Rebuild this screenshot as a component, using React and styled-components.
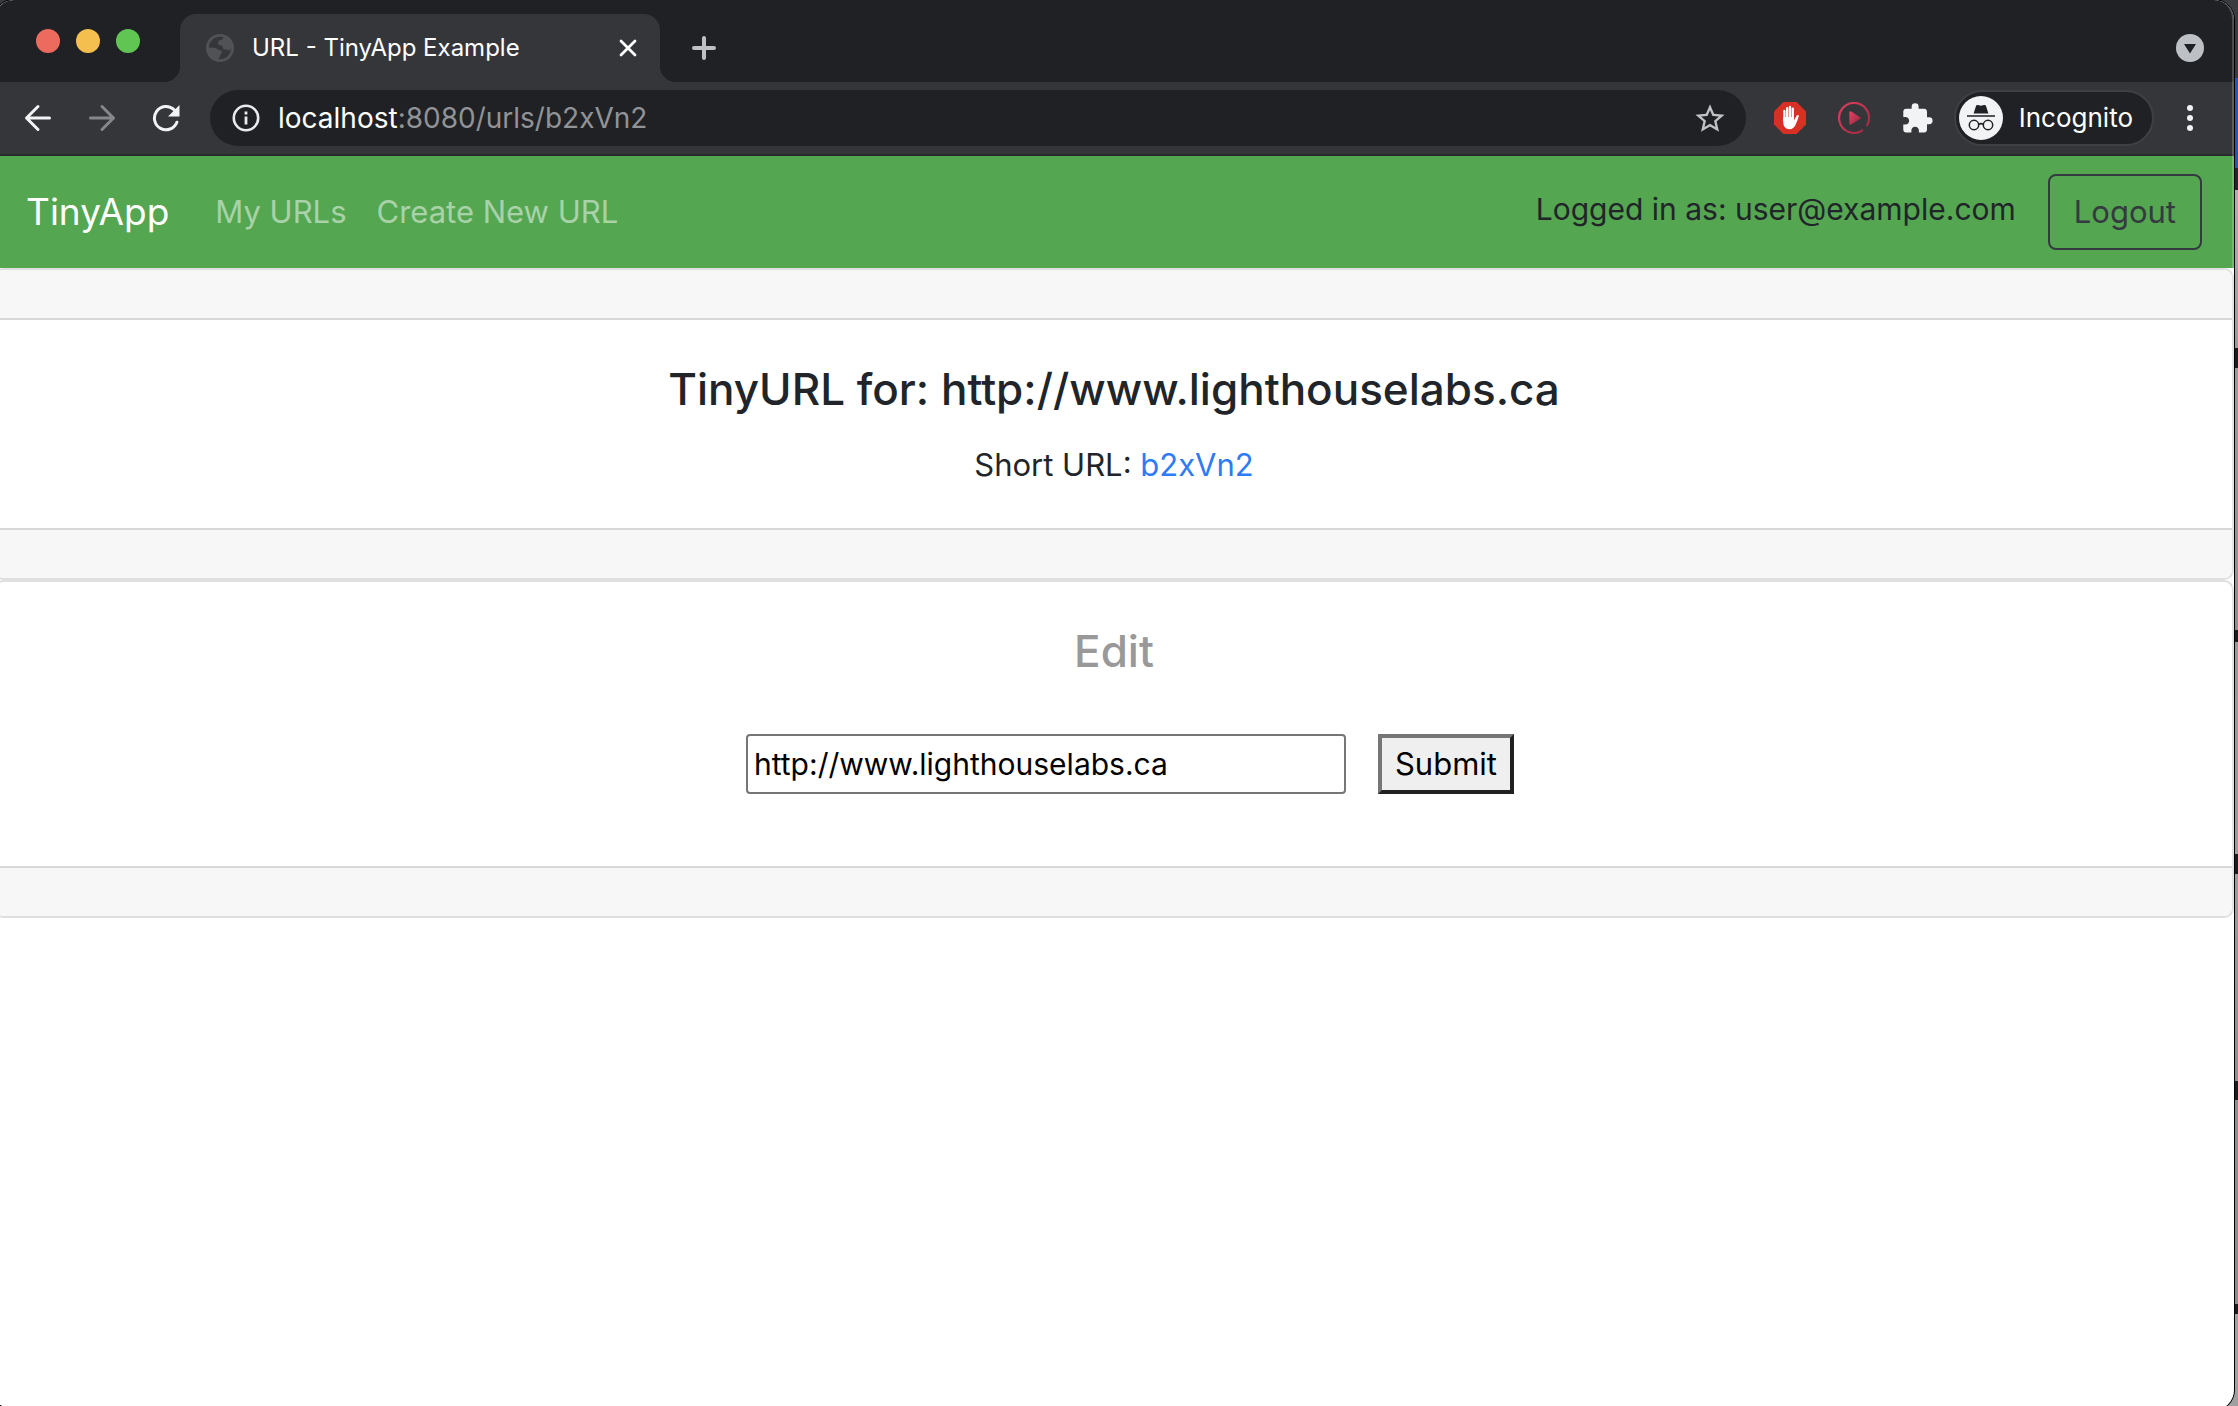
import React from "react";
import styled, { createGlobalStyle } from "styled-components";

const color = {
  frame: "#202124",
  toolbar: "#35363a",
  icon: "#f1f3f4",
  green: "#54a651",
  ink: "#212529",
  rule: "#dfdfdf",
  band: "#f7f7f7",
  link: "#2f7bf6",
};

const GlobalStyle = createGlobalStyle`
  *, *::before, *::after { box-sizing: border-box; }
  body {
    margin: 0;
    font-family: Inter, Roboto, "Liberation Sans", sans-serif;
    font-size: 31px;
    line-height: 46px;
    color: ${color.ink};
  }
  button, input { font: inherit; margin: 0; }
`;

/* ---------- desktop and window ---------- */

const Desktop = styled.div`
  height: 100vh;
  overflow: hidden;
  padding-right: 4px;
  background: linear-gradient(
    #3a3b3e 0 78px, #2458b8 78px 168px, #23272b 168px 190px,
    #b0b0b0 190px, #9c9c9c 348px, #1c1c1e 348px 368px, #9c9c9c 368px,
    #8f8f8f 630px, #1c1c1e 630px 642px, #9a9a9a 642px,
    #9c9c9c 854px, #1c1c1e 854px 874px, #9c9c9c 874px,
    #909090 1081px, #1c1c1e 1081px 1100px, #909090 1100px,
    #8c8c8c 1304px, #1c1c1e 1304px 1314px, #a0a0a0 1314px
  );
`;

const Window = styled.div`
  position: relative;
  display: flex;
  flex-direction: column;
  height: calc(100vh + 4px);
  margin-left: -6px;
  border-radius: 20px;
  overflow: hidden;
  background: #fff;
  box-shadow: 0 0 0 1px #000;

  &::after {
    content: "";
    position: absolute;
    inset: -1px 0 0;
    border: 2px solid rgba(255, 255, 255, 0.2);
    border-top-width: 1px;
    border-radius: 20px;
    pointer-events: none;
  }
`;

/* ---------- browser chrome ---------- */

const TabStrip = styled.div`
  display: flex;
  align-items: flex-end;
  height: 82px;
  padding: 0 12px 0 42px;
  background: ${color.frame};
`;

const Lights = styled.div`
  display: flex;
  align-items: center;
  align-self: stretch;
  gap: 16px;
  margin-right: 40px;
`;

const Light = styled.button`
  width: 24px;
  height: 24px;
  padding: 0;
  border: 0;
  border-radius: 50%;
  background: ${(p) => p.$tint};
`;

const Tab = styled.div`
  position: relative;
  display: flex;
  align-items: center;
  gap: 18px;
  width: 480px;
  height: 68px;
  padding: 0 20px 0 26px;
  border-radius: 16px 16px 0 0;
  background: ${color.toolbar};

  &::before,
  &::after {
    content: "";
    position: absolute;
    bottom: 0;
    width: 16px;
    height: 16px;
  }
  &::before {
    right: 100%;
    background: radial-gradient(circle at 0 0, transparent 16px, ${color.toolbar} 16px);
  }
  &::after {
    left: 100%;
    background: radial-gradient(circle at 100% 0, transparent 16px, ${color.toolbar} 16px);
  }
`;

const TabTitle = styled.span`
  flex: 1;
  font-size: 24px;
  line-height: 32px;
  white-space: nowrap;
  color: #fff;
`;

const IconButton = styled.button`
  display: flex;
  align-items: center;
  justify-content: center;
  flex: none;
  width: ${(p) => (p.$small ? "24px" : "64px")};
  height: ${(p) => (p.$small ? "24px" : "68px")};
  padding: 0;
  border: 0;
  background: none;
  color: ${(p) => p.$tint || color.icon};

  svg { display: block; }
`;

const NewTab = styled(IconButton)`
  margin: 0 auto 0 12px;
`;

const Toolbar = styled.div`
  display: flex;
  align-items: center;
  height: 74px;
  padding: 0 12px;
  border-bottom: 2px solid #28292c;
  background: ${color.toolbar};
`;

const Omnibox = styled.div`
  display: flex;
  align-items: center;
  flex: 1;
  gap: 18px;
  height: 56px;
  margin: 0 12px;
  padding: 0 20px 0 22px;
  border-radius: 28px;
  background: ${color.frame};

  svg { flex: none; }
`;

const Address = styled.div`
  flex: 1;
  font-size: 28px;
  line-height: 38px;
  white-space: nowrap;
  color: #919396;
`;

const Host = styled.span`
  color: #fff;
`;

const Profile = styled.button`
  display: flex;
  align-items: center;
  gap: 16px;
  height: 56px;
  margin: 0 4px;
  padding: 0 19px 0 3px;
  border: 2px solid #3f4043;
  border-radius: 28px;
  background: ${color.frame};
  font-size: 26px;
  line-height: 38px;
  color: #fff;
`;

/* ---------- page ---------- */

const Navbar = styled.nav`
  display: flex;
  align-items: center;
  padding: 18px 32px;
  background: ${color.green};
`;

const Brand = styled.a`
  margin-right: 46px;
  font-size: 37px;
  line-height: 56px;
  text-decoration: none;
  color: #fff;
`;

const NavLinks = styled.div`
  display: flex;
  flex: 1;
  gap: 30px;
`;

const NavLink = styled.a`
  text-decoration: none;
  color: rgba(255, 255, 255, 0.5);
`;

const Account = styled.form`
  display: flex;
  align-items: center;
  gap: 32px;
`;

const Status = styled.span`
  padding-bottom: 6px;
  font-size: 30px;
`;

const Logout = styled.button`
  height: 76px;
  padding: 0 24px;
  border: 2px solid #343a40;
  border-radius: 8px;
  background: transparent;
  color: #343a40;
`;

const Card = styled.section`
  border: 2px solid ${color.rule};
  border-radius: 10px;
  overflow: hidden;
  background: #fff;
  text-align: center;
`;

const Band = styled.div`
  height: 50px;
  background: ${color.band};
  border-top: ${(p) => (p.$footer ? "2px solid #d8d8d8" : "0")};
  border-bottom: ${(p) => (p.$footer ? "0" : "2px solid #d8d8d8")};
`;

const CardBody = styled.div`
  padding: 40px;
`;

const Title = styled.h2`
  margin: 0 0 24px;
  font-size: 44px;
  font-weight: 500;
  line-height: 58px;
  color: ${(p) => (p.$muted ? "#999" : "inherit")};
`;

const Text = styled.p`
  margin: 0;
`;

const ShortLink = styled.a`
  text-decoration: none;
  color: ${color.link};
`;

const EditForm = styled.form`
  display: flex;
  justify-content: center;
  padding: 30px 0 32px;
`;

const UrlInput = styled.input`
  width: 600px;
  height: 60px;
  margin: 0 32px;
  padding: 0 6px;
  border: 2px solid #767676;
  border-radius: 4px;
  background: #fff;
  font-size: 30px;
  color: #000;
`;

const Submit = styled.button`
  height: 60px;
  padding: 0 13px;
  border: 4px solid;
  border-color: #767676 #212121 #212121 #767676;
  background: #efefef;
  color: #000;
`;

/* ---------- icons ---------- */

const Globe = () => (
  <svg width="28" height="28" viewBox="0 0 28 28" aria-hidden="true">
    <circle cx="14" cy="14" r="12.6" fill="none" stroke="#515256" strokeWidth="2.8" />
    <path
      fill="#515256"
      d="M17 2.5c.6 1.6-.2 3-1.800 3.300-2 .4-3.200 1.600-3.200 3.200 0 1.400 1 2.200 2.600 2.200 1.500 0 2.100.8 2.100 2.100 0 1.600 1.100 2.500 3 2.300 1.500-.2 2.300.6 3.600 1.200L26.500 12 22 4zM1.500 13.500 8 13.700c2.800.1 4 2.300 6 2.500 1.600.2 2.200 1.200 1.800 2.600-.4 1.300-1.600 1.500-1.700 2.800-.1 1.600-1 2.600-2.800 4.400L5 23z"
    />
  </svg>
);

const Close = () => (
  <svg width="18" height="18" viewBox="0 0 18 18" aria-hidden="true">
    <path d="M2 2l14 14M16 2 2 16" stroke="#fff" strokeWidth="2.8" strokeLinecap="round" />
  </svg>
);

const Plus = () => (
  <svg width="24" height="24" viewBox="0 0 24 24" aria-hidden="true">
    <path d="M12 2v20M2 12h20" stroke="#bdc1c6" strokeWidth="4" strokeLinecap="round" />
  </svg>
);

const TabSearch = () => (
  <svg width="28" height="28" viewBox="0 0 28 28" aria-hidden="true">
    <circle cx="14" cy="14" r="14" fill="#bdc1c6" />
    <path d="M8 10h12l-6 9.600z" fill={color.frame} />
  </svg>
);

const Arrow = ({ forward }) => (
  <svg width="28" height="28" viewBox="0 0 28 28" fill="none" stroke="currentColor" strokeWidth="3" strokeLinecap="round" strokeLinejoin="round" aria-hidden="true">
    <path d={forward ? "M2.500 14h23M14 2.500 25.500 14 14 25.500" : "M25.500 14h-23M14 2.500 2.500 14 14 25.500"} />
  </svg>
);

const Reload = () => (
  <svg width="28" height="28" viewBox="0 0 28 28" aria-hidden="true">
    <path d="M24.900 18.200A11.600 11.600 0 1 1 22 5.700" fill="none" stroke="currentColor" strokeWidth="3" strokeLinecap="round" />
    <path d="M27.500 1v11.500H16z" fill="currentColor" />
  </svg>
);

const Info = () => (
  <svg width="28" height="28" viewBox="0 0 28 28" aria-hidden="true">
    <circle cx="14" cy="14" r="12.200" fill="none" stroke="#e8eaed" strokeWidth="2.600" />
    <path d="M12.600 7.500h2.800v3h-2.800zM12.600 12.600h2.800v8h-2.800z" fill="#e8eaed" />
  </svg>
);

const Star = () => (
  <svg width="32" height="32" viewBox="1 0.500 22 22" aria-hidden="true">
    <path
      fill="#c1c2c4"
      d="M22 9.240l-7.190-.62L12 2 9.190 8.630 2 9.240l5.460 4.730L5.820 21 12 17.270 18.180 21l-1.630-7.030L22 9.240zM12 15.400l-3.760 2.270 1-4.280-3.320-2.880 4.380-.38L12 6.100l1.710 4.040 4.380.38-3.320 2.880 1 4.280L12 15.400z"
    />
  </svg>
);

const AdBlock = () => (
  <svg width="32" height="32" viewBox="0 0 32 32" aria-hidden="true">
    <path d="M9.400 0h13.200L32 9.400v13.200L22.600 32H9.400L0 22.600V9.400z" fill="#d93025" />
    <g fill="none" stroke="#fff" strokeWidth="2.300" strokeLinecap="round">
      <path d="M10.400 9v10M13.200 6.200V17M16 5v12M18.800 6.600V18" />
    </g>
    <path
      fill="#fff"
      d="M9.250 15h10.700v3.500l2.500-4.600c.6-1.100 2.700-1.100 2.300.4-.8 2.600-1.700 5.600-3.300 8.600-1.300 2.600-3.100 4.300-5.900 4.300-4.100 0-6.300-2.700-6.300-7.200z"
    />
  </svg>
);

const Player = () => (
  <svg width="32" height="32" viewBox="0 0 32 32" aria-hidden="true">
    <defs>
      <linearGradient id="player-tint" x1="0" y1="0" x2="1" y2="1">
        <stop offset="0" stopColor="#e2405f" />
        <stop offset="1" stopColor="#96283f" />
      </linearGradient>
    </defs>
    <path d="M24.300 28.500A15 15 0 1 1 30.200 21l-1 2.200" fill="none" stroke="url(#player-tint)" strokeWidth="2.200" strokeLinecap="round" />
    <path d="M12.300 10.200v11.600L21.700 16z" fill="url(#player-tint)" stroke="url(#player-tint)" strokeWidth="2" strokeLinejoin="round" />
  </svg>
);

const Puzzle = () => (
  <svg width="30" height="30" viewBox="1.800 0.800 21.500 21.500" aria-hidden="true">
    <path
      fill="currentColor"
      d="M20.500 11H19V7c0-1.100-.9-2-2-2h-4V3.500a2.500 2.500 0 0 0-5 0V5H4c-1.100 0-1.990.9-1.990 2v3.800H3.500c1.490 0 2.700 1.210 2.700 2.700s-1.210 2.700-2.700 2.700H2V20c0 1.100.9 2 2 2h3.800v-1.500c0-1.490 1.210-2.700 2.700-2.700 1.490 0 2.700 1.210 2.700 2.700V22H17c1.100 0 2-.9 2-2v-4h1.500a2.500 2.500 0 0 0 0-5z"
    />
  </svg>
);

const Incognito = () => (
  <svg width="44" height="44" viewBox="0 0 44 44" aria-hidden="true">
    <circle cx="22" cy="22" r="22" fill="#f1f3f4" />
    <path d="M14.600 17.400 17 10c.3-1 1-1.300 2-1l3 .8 3-.8c1-.3 1.700 0 2 1l2.400 7.400z" fill="#202124" />
    <g fill="none" stroke="#202124" strokeWidth="1.500">
      <path d="M8 20h28M19.600 28.300c1.600-.9 3.200-.9 4.800 0" />
      <circle cx="15" cy="29" r="4.700" />
      <circle cx="29" cy="29" r="4.700" />
    </g>
  </svg>
);

const Dots = () => (
  <svg width="6" height="26" viewBox="0 0 6 26" fill="currentColor" aria-hidden="true">
    <circle cx="3" cy="3" r="3" />
    <circle cx="3" cy="13" r="3" />
    <circle cx="3" cy="23" r="3" />
  </svg>
);

/* ---------- app ---------- */

const stay = (event) => event.preventDefault();

function BrowserChrome() {
  return (
    <header>
      <TabStrip>
        <Lights>
          <Light $tint="#ed6a5e" aria-label="Close window" />
          <Light $tint="#f5bf4f" aria-label="Minimize window" />
          <Light $tint="#61c554" aria-label="Zoom window" />
        </Lights>
        <Tab>
          <Globe />
          <TabTitle>URL - TinyApp Example</TabTitle>
          <IconButton $small aria-label="Close tab"><Close /></IconButton>
        </Tab>
        <NewTab aria-label="New tab"><Plus /></NewTab>
        <IconButton aria-label="Search tabs"><TabSearch /></IconButton>
      </TabStrip>
      <Toolbar>
        <IconButton aria-label="Back"><Arrow /></IconButton>
        <IconButton $tint="#86878a" aria-label="Forward"><Arrow forward /></IconButton>
        <IconButton aria-label="Reload"><Reload /></IconButton>
        <Omnibox>
          <Info />
          <Address role="textbox" aria-label="Address"><Host>localhost</Host>:8080/urls/b2xVn2</Address>
          <Star />
        </Omnibox>
        <IconButton aria-label="Ad blocker"><AdBlock /></IconButton>
        <IconButton aria-label="Video extension"><Player /></IconButton>
        <IconButton aria-label="Extensions"><Puzzle /></IconButton>
        <Profile><Incognito />Incognito</Profile>
        <IconButton aria-label="Menu"><Dots /></IconButton>
      </Toolbar>
    </header>
  );
}

export default function App() {
  return (
    <>
      <GlobalStyle />
      <Desktop>
        <Window>
          <BrowserChrome />
          <Navbar>
            <Brand href="#home">TinyApp</Brand>
            <NavLinks>
              <NavLink href="#urls">My URLs</NavLink>
              <NavLink href="#new">Create New URL</NavLink>
            </NavLinks>
            <Account onSubmit={stay}>
              <Status>Logged in as: user@example.com</Status>
              <Logout type="submit">Logout</Logout>
            </Account>
          </Navbar>
          <main>
            <Card>
              <Band />
              <CardBody>
                <Title>TinyURL for: http://www.lighthouselabs.ca</Title>
                <Text>Short URL: <ShortLink href="#b2xVn2">b2xVn2</ShortLink></Text>
              </CardBody>
              <Band $footer />
            </Card>
            <Card>
              <CardBody>
                <Title $muted>Edit</Title>
                <EditForm onSubmit={stay}>
                  <UrlInput type="text" aria-label="Long URL" defaultValue="http://www.lighthouselabs.ca" />
                  <Submit type="submit">Submit</Submit>
                </EditForm>
              </CardBody>
              <Band $footer />
            </Card>
          </main>
        </Window>
      </Desktop>
    </>
  );
}
